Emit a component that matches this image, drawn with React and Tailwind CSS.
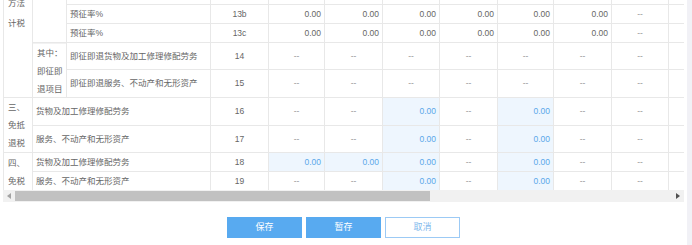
import React from "react";

const colStart = ["col-start-1","col-start-2","col-start-3","col-start-4","col-start-5","col-start-6","col-start-7","col-start-8","col-start-9","col-start-10","col-start-11","col-start-12"];
const rowStart = ["row-start-1","row-start-2","row-start-3","row-start-4","row-start-5","row-start-6","row-start-7","row-start-8","row-start-9"];

const B = "B";
const data = {
  2: ["0.00","0.00","0.00","0.00","0.00","0.00","--"],
  3: ["0.00","0.00","0.00","0.00","0.00","0.00","--"],
  4: ["--","--","--","--","--","--","--"],
  5: ["--","--","--","--","--","--","--"],
  6: ["--","--",B,"--",B,"--","--"],
  7: ["--","--",B,"--",B,"--","--"],
  8: [B,B,B,"--",B,"--","--"],
  9: ["--","--",B,"--",B,"--","--"],
};

const rowNums = { 2: "13b", 3: "13c", 4: "14", 5: "15", 6: "16", 7: "17", 8: "18", 9: "19" };
const items = {
  2: "预征率%",
  3: "预征率%",
  4: "即征即退货物及加工修理修配劳务",
  5: "即征即退服务、不动产和无形资产",
};

function Cell({ r, c, v }) {
  const base = `${rowStart[r - 1]} ${colStart[c - 1]} flex items-center`;
  if (v === B) {
    return <div className={`${base} justify-end pr-[3px] bg-[#eef6fe] text-[#5aa8ea]`}>0.00</div>;
  }
  if (v === "--") {
    return <div className={`${base} justify-center bg-white text-[#999]`}>--</div>;
  }
  if (v) {
    return <div className={`${base} justify-end pr-[3px] bg-white text-[#666]`}>{v}</div>;
  }
  return <div className={`${base} bg-white`} />;
}

export default function App() {
  const cells = [];
  for (let r = 1; r <= 9; r++) {
    cells.push(
      <div key={`n${r}`} className={`${rowStart[r - 1]} col-start-4 flex items-center justify-center bg-white text-[#666]`}>
        {rowNums[r] || ""}
      </div>
    );
    if (r <= 5) {
      cells.push(
        <div key={`i${r}`} className={`${rowStart[r - 1]} col-start-3 flex items-center pl-[3px] bg-white text-[#666] whitespace-nowrap`}>
          {items[r] || ""}
        </div>
      );
    }
    for (let c = 5; c <= 12; c++) {
      const v = data[r] ? data[r][c - 5] : "";
      cells.push(<Cell key={`d${r}-${c}`} r={r} c={c} v={v} />);
    }
  }

  return (
    <div className="flex w-[692px] h-[245px] bg-white text-[8.5px] leading-none" style={{ fontFamily: '"Liberation Sans", "Noto Sans CJK SC", sans-serif' }}>
      <div className="w-[687px] flex flex-col pl-[3px]">
        <div className="grid w-[681px] grid-cols-[28px_33px_143px_57px_55px_57px_56px_57px_55px_57px_56px_15px] grid-rows-[4px_18px_18px_26px_27px_27px_26px_18px_18px] gap-px bg-[#e8e8e8] pl-px">
          <div className="row-start-1 row-span-5 col-start-1 bg-white overflow-hidden text-[#666] pl-[4px]">
            <div className="-mt-[7px] leading-[20px]">
              <div>方法</div>
              <div>计税</div>
            </div>
          </div>
          <div className="row-start-1 row-span-3 col-start-2 bg-white" />
          <div className="row-start-4 row-span-2 col-start-2 bg-white flex flex-col justify-center pl-[4px] leading-[18px] text-[#666] border-t border-[#f2f2f2]">
            <div>其中：</div>
            <div>即征即</div>
            <div>退项目</div>
          </div>
          <div className="row-start-6 row-span-2 col-start-1 bg-white flex flex-col justify-center pl-[4px] leading-[18px] text-[#666]">
            <div>三、</div>
            <div>免抵</div>
            <div>退税</div>
          </div>
          <div className="row-start-6 col-start-2 col-span-2 bg-white flex items-center pl-[3px] text-[#666]">货物及加工修理修配劳务</div>
          <div className="row-start-7 col-start-2 col-span-2 bg-white flex items-center pl-[3px] text-[#666]">服务、不动产和无形资产</div>
          <div className="row-start-8 row-span-2 col-start-1 bg-white flex flex-col justify-center pl-[4px] leading-[18px] text-[#666]">
            <div>四、</div>
            <div>免税</div>
          </div>
          <div className="row-start-8 col-start-2 col-span-2 bg-white flex items-center pl-[3px] text-[#666]">货物及加工修理修配劳务</div>
          <div className="row-start-9 col-start-2 col-span-2 bg-white flex items-center pl-[3px] text-[#666]">服务、不动产和无形资产</div>
          {cells}
        </div>
        <div className="w-[681px] h-[12px] bg-[#f1f1f1] flex items-center">
          <div className="w-[12px] flex items-center justify-center">
            <svg width="4" height="6" viewBox="0 0 4 6"><path d="M4 0 L0 3 L4 6 Z" fill="#a3a3a3" /></svg>
          </div>
          <div className="w-[415px] h-[10px] bg-[#c1c1c1]" />
          <div className="flex-1" />
          <div className="w-[12px] flex items-center justify-center">
            <svg width="4" height="6" viewBox="0 0 4 6"><path d="M0 0 L4 3 L0 6 Z" fill="#505050" /></svg>
          </div>
        </div>
        <div className="flex justify-center gap-[4px] mt-[15px] pr-[3px]">
          <button className="w-[75px] h-[21px] bg-[#58aaf0] text-white text-[9px]">保存</button>
          <button className="w-[75px] h-[21px] bg-[#58aaf0] text-white text-[9px]">暂存</button>
          <button className="w-[75px] h-[21px] bg-white border border-[#9ccaf5] text-[#7fb8ec] text-[9px]">取消</button>
        </div>
      </div>
      <div className="w-[5px] h-full bg-[#f1f1f6]" />
    </div>
  );
}
